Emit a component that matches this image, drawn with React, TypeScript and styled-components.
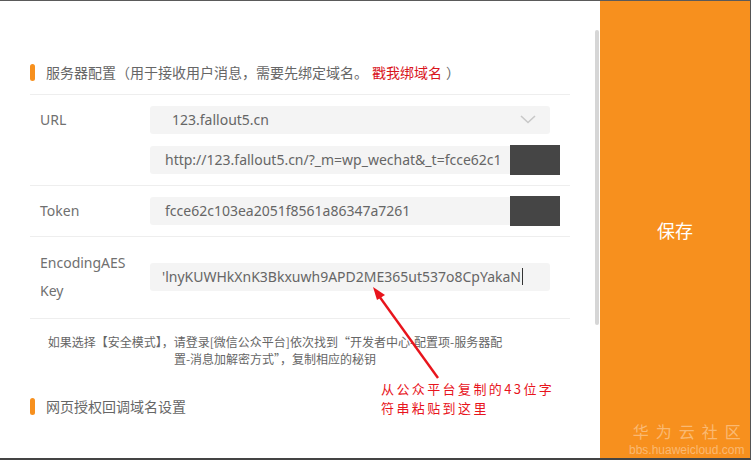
import React from 'react';
import styled, { createGlobalStyle } from 'styled-components';

const GlobalStyle = createGlobalStyle`
html, body {
  margin: 0;
  padding: 0;
  background: #fff;
  overflow: hidden;
}
body {
  font-family: "Noto Sans", "Noto Sans CJK SC", sans-serif;
}
`;

const Frame = styled.div`
display: flex;
width: 751px;
height: 460px;
box-sizing: border-box;
border-top: 1px solid #5a5a5a;
border-bottom: 2px solid #444;
border-right: 1px solid #555;
`;

const LeftPanel = styled.div`
position: relative;
flex: none;
width: 600px;
display: flex;
background: #fff;
`;

const Content = styled.div`
width: 590px;
box-sizing: border-box;
padding: 61px 20px 0 30px;
`;

const Track = styled.div`
width: 10px;
`;

const Thumb = styled.div`
margin: 29px 0 0 5px;
width: 4px;
height: 295px;
border-radius: 2px;
background: #d6d6d6;
`;

const SectionHeader = styled.div<{ $top?: number }>`
display: flex;
align-items: center;
gap: 11px;
height: 20px;
margin: ${({ $top }) => $top || 0}px 0 12px 0;
font-family: "Noto Sans CJK SC", sans-serif;
font-size: 14px;
color: #666;
`;

const Pill = styled.span`
width: 5px;
height: 17px;
border-radius: 3px;
background: #f7901e;
`;

const RedLink = styled.span`
color: #d9141c;
margin: 0 4px;
`;

const Rows = styled.div`
border-top: 1px solid #eeeeee;
`;

const FormRow = styled.div<{ $center?: boolean; $pad?: string }>`
display: flex;
align-items: ${({ $center }) => ($center ? 'center' : 'flex-start')};
padding: ${({ $pad }) => $pad || '11px 0'};
border-bottom: 1px solid #eeeeee;
`;

const Label = styled.div`
flex: none;
width: 120px;
box-sizing: border-box;
padding-left: 10px;
line-height: 28px;
font-size: 14px;
color: #707070;
`;

const Fields = styled.div`
position: relative;
display: flex;
flex-direction: column;
gap: 12px;
width: 400px;
`;

const FieldBox = styled.div<{ $indent?: number }>`
position: relative;
height: 28px;
line-height: 28px;
box-sizing: border-box;
padding-left: ${({ $indent }) => $indent || 15}px;
background: #f4f4f4;
border-radius: 3px;
font-size: 14px;
color: #666;
white-space: nowrap;
overflow: hidden;
`;

const Chevron = styled.svg`
position: absolute;
right: 14px;
top: 9px;
`;

const Caret = styled.span`
display: inline-block;
width: 1px;
height: 17px;
background: #333;
vertical-align: -3px;
margin-left: 1px;
`;

const Redact = styled.div`
position: absolute;
left: 360px;
top: -1px;
width: 50px;
height: 30px;
background: #454545;
`;

const Help = styled.div`
width: 490px;
padding-top: 14px;
text-align: center;
font-family: "Noto Sans CJK SC", sans-serif;
font-size: 12px;
line-height: 17px;
color: #666;
`;

const Annotation = styled.div`
position: absolute;
left: 381px;
top: 378px;
font-family: "Noto Sans CJK SC", sans-serif;
font-size: 13px;
line-height: 19px;
letter-spacing: 2.4px;
color: #e8141c;
`;

const ArrowLayer = styled.svg`
position: absolute;
left: 0;
top: 0;
pointer-events: none;
`;

const SavePanel = styled.div`
position: relative;
flex: 1;
display: flex;
align-items: center;
justify-content: center;
background: #f7901e;
color: #fff;
font-family: "Noto Sans CJK SC", sans-serif;
font-size: 18px;
`;

const Watermark = styled.div`
position: absolute;
left: 29px;
bottom: 1px;
display: flex;
flex-direction: column;
align-items: center;
color: rgba(255, 255, 255, 0.38);
`;

const WatermarkTitle = styled.span`
font-family: "Noto Sans CJK SC", sans-serif;
font-size: 16px;
letter-spacing: 7px;
margin-right: -7px;
line-height: 24px;
`;

const WatermarkUrl = styled.span`
font-family: "Liberation Sans", Arial, sans-serif;
font-size: 12px;
line-height: 14px;
`;

const App = () => (
  <>
    <GlobalStyle />
    <Frame>
      <LeftPanel>
        <Content>
          <SectionHeader>
            <Pill />
            <span>
              服务器配置（用于接收用户消息，需要先绑定域名。<RedLink>戳我绑域名</RedLink>）
            </span>
          </SectionHeader>
          <Rows>
            <FormRow>
              <Label>URL</Label>
              <Fields>
                <FieldBox $indent={22}>
                  123.fallout5.cn
                  <Chevron width="16" height="9" viewBox="0 0 16 9">
                    <path d="M1 1l7 6.5L15 1" fill="none" stroke="#c8c8c8" strokeWidth="1.6" />
                  </Chevron>
                </FieldBox>
                <FieldBox>http://123.fallout5.cn/?_m=wp_wechat&amp;_t=fcce62c1</FieldBox>
                <Redact style={{ top: 39 }} />
              </Fields>
            </FormRow>
            <FormRow>
              <Label>Token</Label>
              <Fields>
                <FieldBox>fcce62c103ea2051f8561a86347a7261</FieldBox>
                <Redact />
              </Fields>
            </FormRow>
            <FormRow $center $pad="12px 0 13px">
              <Label>
                EncodingAES
                <br />
                Key
              </Label>
              <Fields>
                <FieldBox $indent={12}>
                  'lnyKUWHkXnK3Bkxuwh9APD2ME365ut537o8CpYakaN
                  <Caret />
                </FieldBox>
              </Fields>
            </FormRow>
          </Rows>
          <Help>
            如果选择【安全模式】，请登录[微信公众平台]依次找到“开发者中心-配置项-服务器配
            <br />
            置-消息加解密方式”，复制相应的秘钥
          </Help>
          <SectionHeader $top={29}>
            <Pill />
            <span>网页授权回调域名设置</span>
          </SectionHeader>
        </Content>
        <Track>
          <Thumb />
        </Track>
        <ArrowLayer width="600" height="458" viewBox="0 0 600 458">
          <line x1="438" y1="377" x2="379" y2="295" stroke="#e8141c" strokeWidth="2.4" />
          <polygon points="373,286 385,294 377,299" fill="#e8141c" />
        </ArrowLayer>
        <Annotation>
          从公众平台复制的43位字
          <br />
          符串粘贴到这里
        </Annotation>
      </LeftPanel>
      <SavePanel>
        保存
        <Watermark>
          <WatermarkTitle>华为云社区</WatermarkTitle>
          <WatermarkUrl>bbs.huaweicloud.com</WatermarkUrl>
        </Watermark>
      </SavePanel>
    </Frame>
  </>
);

export default App;
